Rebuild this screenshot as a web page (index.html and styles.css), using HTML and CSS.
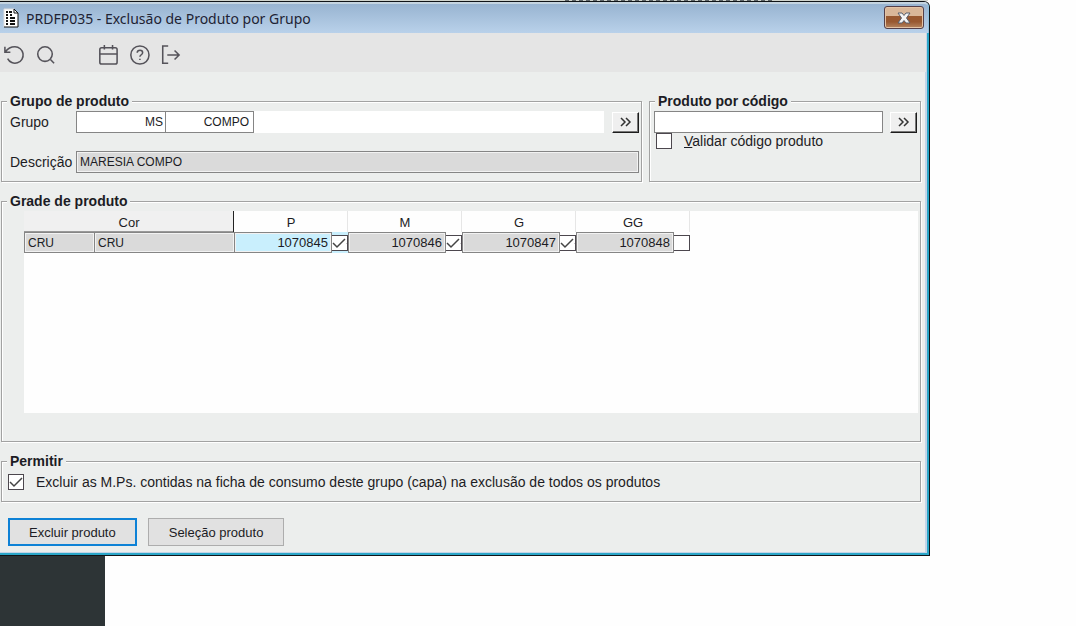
FILE: index.html
```
<!DOCTYPE html>
<html lang="pt-BR">
<head>
    <meta charset="UTF-8">
    <meta name="viewport" content="width=device-width, initial-scale=1.0">
    <title>PRDFP035 - Exclusão de Produto por Grupo</title>
    <link rel="stylesheet" href="styles.css">
</head>
<body>
    <div class="back-strip"><div class="back-marks"></div></div>
    <main class="window">
        <header class="title-bar">
            <svg class="title-icon" width="16" height="20" viewBox="0 0 16 20">
                <path d="M1 1H11L15 5V19H1Z" fill="#fff"/>
                <path d="M1 19V1H11" fill="none" stroke="#ddd"/>
                <path d="M11 1V5H15M11 1L15 5V19H1" fill="none" stroke="#111"/>
                <path d="M3 4H5M6 4H9M3 7H5M7 7H9M3 10H5M7 10H12M3 13H5M7 13H12M3 16H5M7 16H12" stroke="#111" stroke-width="2"/>
            </svg>
            <h1>PRDFP035 - Exclusão de Produto por Grupo</h1>
            <button type="button" class="close" aria-label="Fechar">
                <svg width="14" height="12" viewBox="0 0 14 12">
                    <path d="M1 1H5L7 3.5L9 1H13L9.5 6L13 11H9L7 8.5L5 11H1L4.5 6Z" fill="#f4f4f4" stroke="#59606e"/>
                </svg>
            </button>
        </header>

        <nav class="toolbar">
            <button type="button" aria-label="Desfazer">
                <svg viewBox="0 0 22 22"><path d="M1 2V8H7M1.500 7.500C4 4 7 2 12 2A9 9 0 1 1 4 15"/></svg>
            </button>
            <button type="button" aria-label="Pesquisar">
                <svg viewBox="0 0 22 22"><circle cx="11" cy="10" r="8"/><path d="M17 16L21 20"/></svg>
            </button>
            <button type="button" class="calendar" aria-label="Calendário">
                <svg viewBox="0 0 22 22"><rect x="2" y="3" width="19" height="18" rx="2"/><path d="M2 10H21M7 0V5M16 0V5"/></svg>
            </button>
            <button type="button" aria-label="Ajuda">
                <svg viewBox="0 0 22 22"><circle cx="12" cy="11" r="10"/><path d="M9 8.500C9.300 5 15 5 15 8.500C15 10.500 12 11 12 13M12 15V16.500"/></svg>
            </button>
            <button type="button" aria-label="Sair">
                <svg viewBox="0 0 22 22"><path d="M9 1H3V20H9M8 11H21M16 6L21 11L16 16"/></svg>
            </button>
        </nav>

        <form class="content">
            <div class="groups">
                <fieldset class="group-product">
                    <legend>Grupo de produto</legend>
                    <div class="row">
                        <label for="grupo">Grupo</label>
                        <div class="group-inputs">
                            <input type="text" id="grupo" class="field code" value="MS">
                            <input type="text" class="field code" value="COMPO" aria-label="Código do grupo">
                        </div>
                        <button type="button" class="search" aria-label="Pesquisar grupo">
                            <svg width="12" height="10" viewBox="0 0 12 10"><path d="M1 1L5 5L1 9M6 1L10 5L6 9"/></svg>
                        </button>
                    </div>
                    <div class="row">
                        <label for="descricao">Descrição</label>
                        <input type="text" id="descricao" class="field locked" value="MARESIA COMPO" readonly>
                    </div>
                </fieldset>

                <fieldset class="by-code">
                    <legend>Produto por código</legend>
                    <div class="code-row">
                        <input type="text" class="field" aria-label="Código do produto">
                        <button type="button" class="search" aria-label="Pesquisar produto">
                            <svg width="12" height="10" viewBox="0 0 12 10"><path d="M1 1L5 5L1 9M6 1L10 5L6 9"/></svg>
                        </button>
                    </div>
                    <div class="check-row">
                        <input type="checkbox" id="validar">
                        <label for="validar"><u>V</u>alidar código produto</label>
                    </div>
                </fieldset>
            </div>

            <fieldset class="grid-group">
                <legend>Grade de produto</legend>
                <div class="grid">
                    <table>
                        <colgroup>
                            <col class="col-code">
                            <col class="col-color">
                            <col class="col-size">
                            <col class="col-size">
                            <col class="col-size">
                            <col class="col-size">
                        </colgroup>
                        <thead>
                            <tr>
                                <th colspan="2" class="color-head">Cor</th>
                                <th>P</th>
                                <th>M</th>
                                <th>G</th>
                                <th>GG</th>
                            </tr>
                        </thead>
                        <tbody>
                            <tr>
                                <td><div class="cell name">CRU</div></td>
                                <td><div class="cell name">CRU</div></td>
                                <td><div class="size active"><span class="cell">1070845</span><input type="checkbox" aria-label="P" checked></div></td>
                                <td><div class="size"><span class="cell">1070846</span><input type="checkbox" aria-label="M" checked></div></td>
                                <td><div class="size"><span class="cell">1070847</span><input type="checkbox" aria-label="G" checked></div></td>
                                <td><div class="size"><span class="cell">1070848</span><input type="checkbox" aria-label="GG"></div></td>
                            </tr>
                        </tbody>
                    </table>
                </div>
            </fieldset>

            <fieldset class="allow">
                <legend>Permitir</legend>
                <div class="check-row">
                    <input type="checkbox" id="excluirMps" checked>
                    <label for="excluirMps">Excluir as M.Ps. contidas na ficha de consumo deste grupo (capa) na exclusão de todos os produtos</label>
                </div>
            </fieldset>

            <div class="actions">
                <button type="submit" class="primary">Excluir produto</button>
                <button type="button">Seleção produto</button>
            </div>
        </form>
    </main>
    <div class="back">
        <div class="back-menu"></div>
    </div>
</body>
</html>
```
FILE: styles.css
```
* {
    box-sizing: border-box;
}

body {
    margin: 0;
    min-height: 100vh;
    display: flex;
    flex-direction: column;
    background-color: #fefefe;
    font-family: "Liberation Sans", Arial, sans-serif;
    font-size: 14px;
    color: #1c1c24;
}

button, input {
    font-family: inherit;
    font-size: inherit;
    color: inherit;
    margin: 0;
}

/* parte da tela que fica atrás da janela */
.back-strip {
    height: 1px;
    margin-right: 148px;
    background-color: #cfd3cc;
}

.back-marks {
    height: 1px;
    width: 210px;
    margin-left: auto;
    margin-right: 153px;
    background: repeating-linear-gradient(90deg, #5d6468 0 4px, #cfd3cc 4px 7px);
}

.back {
    flex: 1;
    display: flex;
}

.back-menu {
    width: 105px;
    background-color: #2d3436;
}

.window {
    margin-right: 146px;
    border: 1px solid #101418;
    border-left: none;
    border-top-right-radius: 6px;
    background-color: #eceeed;
    box-shadow: inset -2px -2px 0 #2ba6c8, inset -4px -3px 0 #c3d4e8;
}

.title-bar {
    height: 31px;
    display: flex;
    align-items: center;
    padding: 0 4px 2px 3px;
    border-top: 2px solid #c4d4e0;
    border-right: 1px solid #8fc0dc;
    border-top-right-radius: 5px;
    background: linear-gradient(#98b4d1, #b9d1ea);
}

.title-bar h1 {
    flex: 1;
    margin: 2px 0 0 7px;
    font-family: "Noto Sans", "Open Sans", sans-serif;
    font-size: 14px;
    line-height: 20px;
    font-weight: normal;
    color: #1e2334;
}

.close {
    width: 40px;
    height: 23px;
    display: flex;
    align-items: center;
    justify-content: center;
    padding: 0;
    border: 1px solid #54404a;
    border-radius: 3px;
    background: linear-gradient(#d9b799 0 42%, #985830 42% 70%, #b58560);
    box-shadow: inset 0 0 0 1px #e3c3a5;
}

.toolbar {
    height: 39px;
    display: flex;
    align-items: center;
    gap: 11px;
    padding: 4px 4px 0;
    margin-right: 3px;
    background-color: #e5e5e5;
}

.toolbar button {
    width: 20px;
    height: 20px;
    padding: 0;
    border: none;
    background: none;
}

.toolbar .calendar {
    margin-left: 32px;
}

.toolbar svg {
    display: block;
    width: 20px;
    height: 20px;
    fill: none;
    stroke: #55535a;
    stroke-width: 1.7;
    overflow: visible;
}

.content {
    padding: 21px 8px 9px 1px;
}

fieldset {
    min-width: 0;
    margin: 0;
    padding: 2px 2px 8px;
    border: 1px solid #a2a2a2;
    box-shadow: 1px 1px 0 #fff, inset 1px 1px 0 #fff;
}

legend {
    margin-left: 3px;
    padding: 0 3px;
    font-size: 14px;
    line-height: 16px;
    font-weight: bold;
    background-color: #eceeed;
}

.groups {
    display: grid;
    grid-template-columns: 641fr 272fr;
    gap: 7px;
}

.row {
    display: flex;
    align-items: center;
    margin-bottom: 18px;
}

.row:last-child {
    margin-bottom: 0;
}

.row label {
    width: 72px;
    padding-left: 6px;
}

.field {
    flex: 1;
    min-width: 0;
    height: 22px;
    padding: 0 3px;
    border: 1px solid #858585;
    background-color: #fff;
    font-size: 12px;
}

.locked {
    background-color: #dadada;
    box-shadow: inset 0 0 0 1px #f2f2f2;
}

.group-inputs {
    flex: 1;
    display: flex;
    margin-right: 8px;
    background-color: #fff;
}

.code {
    flex: none;
    width: 89px;
    padding-right: 4px;
    text-align: right;
}

.code:first-child {
    padding-right: 2px;
    border-right: none;
}

.search {
    width: 27px;
    height: 21px;
    padding: 0;
    border: 1px solid;
    border-color: #fff #1c1c1c #1c1c1c #fff;
    background-color: #efefef;
    box-shadow: inset -1px -1px 0 #777;
}

.search svg {
    fill: none;
    stroke: #333;
    stroke-width: 1.5;
}

.code-row {
    display: flex;
    align-items: center;
    gap: 7px;
    padding: 0 1px 0 2px;
}

.check-row {
    display: flex;
    align-items: center;
    padding-left: 4px;
}

.check-row label {
    margin-left: 12px;
}

input[type="checkbox"] {
    appearance: none;
    flex: none;
    width: 16px;
    height: 16px;
    border: 1px solid #4c474e;
    background-color: #fff;
}

input[type="checkbox"]:checked {
    background-image: url("data:image/svg+xml,%3Csvg xmlns='http://www.w3.org/2000/svg' viewBox='0 0 14 14'%3E%3Cpath d='M1 7L5 11L13 3' fill='none' stroke='%23444' stroke-width='1.5'/%3E%3C/svg%3E");
}

.grid-group, .allow {
    margin-top: 11px;
}

.grid-group {
    padding: 2px 2px 28px 22px;
}

.grid-group legend {
    margin-left: -17px;
}

.grid {
    min-height: 202px;
    background-color: #fefefe;
}

.grid table {
    table-layout: fixed;
    width: 666px;
    border-collapse: collapse;
    font-size: 13px;
}

.col-code {
    width: 70px;
}

.col-color {
    width: 140px;
}

.col-size {
    width: 114px;
}

.grid th {
    height: 21px;
    padding: 2px 0 0;
    font-weight: normal;
    box-shadow: inset -1px 0 0 #e6e6e6;
}

.grid .color-head {
    background-color: #f0f0f0;
    box-shadow: inset -1px 0 0 #222, inset 0 -1px 0 #999;
}

.grid td {
    padding: 0;
}

.cell {
    height: 21px;
    padding: 0 3px;
    border: 1px solid #858585;
    background-color: #dadada;
    box-shadow: inset 0 0 0 1px #f2f2f2;
    line-height: 20px;
}

.name {
    font-size: 12px;
    border-right: none;
}

.size {
    display: flex;
    align-items: center;
}

.size .cell {
    flex: 1;
    text-align: right;
}

.size input[type="checkbox"] {
    border-left: none;
}

.active {
    background-color: #c9effd;
}

.active .cell {
    background-color: #c9effd;
}

.allow {
    padding: 4px 2px 11px;
}

.allow .check-row {
    height: 17px;
}

.actions {
    display: flex;
    gap: 11px;
    margin: 16px 0 0 7px;
}

.actions button {
    height: 28px;
    padding: 0 20px;
    border: 1px solid #adadad;
    background-color: #e1e1e1;
    font-size: 13px;
}

.actions .primary {
    padding: 0 19px;
    border: 2px solid #0e82d6;
}
```
